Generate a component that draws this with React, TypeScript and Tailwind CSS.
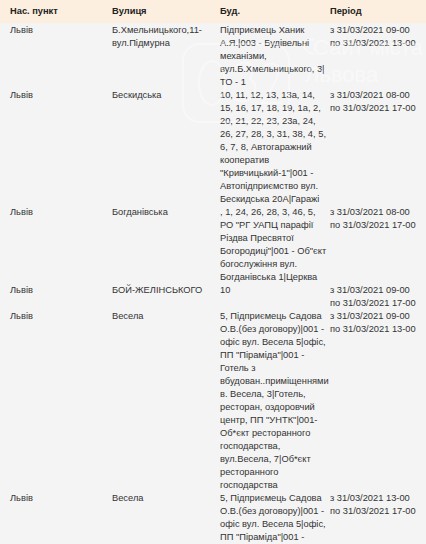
import React from "react";

type Row = { city: string; street: string[]; bud: string[]; period: string[] };

const rows: Row[] = [
  {
    city: "Львів",
    street: ["Б.Хмельницького,11-", "вул.Підмурна"],
    bud: [
      "Підприємець Ханик",
      "А.Я.|003 - Будівельні",
      "механізми,",
      "вул.Б.Хмельницького, 3|",
      "ТО - 1",
    ],
    period: ["з 31/03/2021 09-00", "по 31/03/2021 13-00"],
  },
  {
    city: "Львів",
    street: ["Бескидська"],
    bud: [
      "10, 11, 12, 13, 13а, 14,",
      "15, 16, 17, 18, 19, 1а, 2,",
      "20, 21, 22, 23, 23а, 24,",
      "26, 27, 28, 3, 31, 38, 4, 5,",
      "6, 7, 8, Автогаражний",
      "кооператив",
      "\"Кривчицький-1\"|001 -",
      "Автопідприємство вул.",
      "Бескидська 20А|Гаражі",
    ],
    period: ["з 31/03/2021 08-00", "по 31/03/2021 17-00"],
  },
  {
    city: "Львів",
    street: ["Богданівська"],
    bud: [
      ", 1, 24, 26, 28, 3, 46, 5,",
      "РО \"РГ УАПЦ парафії",
      "Різдва Пресвятої",
      "Богородиці\"|001 - Об\"єкт",
      "богослужіння вул.",
      "Богданівська 1|Церква",
    ],
    period: ["з 31/03/2021 08-00", "по 31/03/2021 17-00"],
  },
  {
    city: "Львів",
    street: ["БОЙ-ЖЕЛІНСЬКОГО"],
    bud: ["10"],
    period: ["з 31/03/2021 09-00", "по 31/03/2021 17-00"],
  },
  {
    city: "Львів",
    street: ["Весела"],
    bud: [
      "5, Підприємець Садова",
      "О.В.(без договору)|001 -",
      "офіс вул. Весела 5|офіс,",
      "ПП \"Піраміда\"|001 -",
      "Готель з",
      "вбудован..приміщеннями",
      "в. Весела, 3|Готель,",
      "ресторан, оздоровчий",
      "центр, ПП \"УНТК\"|001-",
      "Об*єкт ресторанного",
      "господарства,",
      "вул.Весела, 7|Об*єкт",
      "ресторанного",
      "господарства",
    ],
    period: ["з 31/03/2021 09-00", "по 31/03/2021 13-00"],
  },
  {
    city: "Львів",
    street: ["Весела"],
    bud: [
      "5, Підприємець Садова",
      "О.В.(без договору)|001 -",
      "офіс вул. Весела 5|офіс,",
      "ПП \"Піраміда\"|001 -",
    ],
    period: ["з 31/03/2021 13-00", "по 31/03/2021 17-00"],
  },
];

function Lines({ items }: { items: string[] }) {
  return (
    <div>
      {items.map((t, i) => (
        <div key={i} className="whitespace-nowrap">
          {t}
        </div>
      ))}
    </div>
  );
}

export default function App() {
  return (
    <div
      className="relative h-[544px] w-[426px] overflow-hidden bg-[#f4f4f4] text-[9.3px] leading-[13px] text-[#333333]"
      style={{ fontFamily: '"Liberation Sans", Arial, sans-serif' }}
    >
      <div className="grid grid-cols-[102px_108px_110px_1fr] bg-[#fcefdf] py-[5px] font-bold text-[#222222]">
        <div className="pl-[10px]">Нас. пункт</div>
        <div className="pl-[10px]">Вулиця</div>
        <div className="pl-[10px]">Буд.</div>
        <div className="pl-[10px]">Період</div>
      </div>
      <div className="flex flex-col pt-px">
        {rows.map((r, i) => (
          <div key={i} className="grid grid-cols-[102px_108px_110px_1fr]">
            <div className="pl-[10px]">{r.city}</div>
            <div className="pl-[10px]">
              <Lines items={r.street} />
            </div>
            <div className="pl-[10px]">
              <Lines items={r.bud} />
            </div>
            <div className="pl-[10px]">
              <Lines items={r.period} />
            </div>
          </div>
        ))}
      </div>
      <div
        aria-hidden="true"
        className="pointer-events-none absolute left-[182px] top-[43px] h-[80px] w-[108px] rounded-[18px] border-2 border-white/40"
      />
      <svg
        aria-hidden="true"
        className="pointer-events-none absolute left-[182px] top-[43px]"
        width="108"
        height="80"
        viewBox="0 0 108 80"
      >
        <ellipse cx="30" cy="40" rx="13" ry="22" fill="none" stroke="rgba(255,255,255,0.4)" strokeWidth="2" />
        <path d="M52 26 Q58 18 66 20 Q74 24 68 36 Q76 40 72 52 Q64 62 52 56" fill="none" stroke="rgba(255,255,255,0.4)" strokeWidth="2" />
        <path d="M80 26 Q88 16 96 24 Q100 32 80 60 L100 60" fill="none" stroke="rgba(255,255,255,0.4)" strokeWidth="2" />
      </svg>
      <svg
        aria-hidden="true"
        className="pointer-events-none absolute left-[300px] top-[30px]"
        width="120"
        height="60"
        viewBox="0 0 120 60"
      >
        <path d="M14 10 Q4 8 4 16 Q4 22 14 24" fill="none" stroke="rgba(255,255,255,0.45)" strokeWidth="1.5" />
      </svg>
      <div className="pointer-events-none absolute left-[305px] top-[34px] text-[22px] leading-[27px] text-white/45">
        <div className="pl-[8px]">Сайт міста</div>
        <div>Львова</div>
      </div>
    </div>
  );
}
